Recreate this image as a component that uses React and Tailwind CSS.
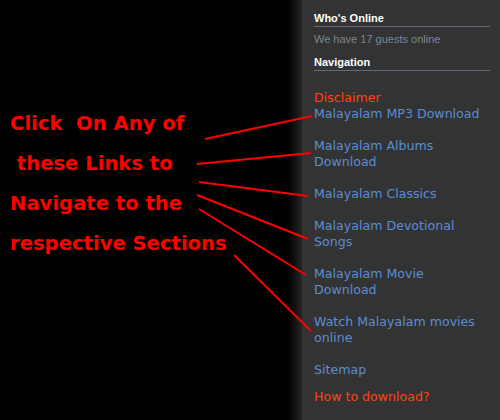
/**
 * Navigation help panel
 * Black canvas with red hints pointing at the sidebar links
 */

const links = [
    { label: 'Disclaimer', hot: true, gap: 'mt-[19px]' },
    { label: 'Malayalam MP3 Download', gap: '' },
    { label: 'Malayalam Albums Download', gap: 'mt-4' },
    { label: 'Malayalam Classics', gap: 'mt-4' },
    { label: 'Malayalam Devotional Songs', gap: 'mt-4' },
    { label: 'Malayalam Movie Download', gap: 'mt-4' },
    { label: 'Watch Malayalam movies online', gap: 'mt-4' },
    { label: 'Sitemap', gap: 'mt-4' },
    { label: 'How to download?', hot: true, gap: 'mt-[11px]' },
];

// arrows from the hint text to the links
const arrows = [
    [205, 139, 312, 116],
    [197, 164, 311, 153],
    [199, 182, 308, 196],
    [197, 195, 308, 239],
    [199, 209, 306, 275],
    [234, 255, 311, 331],
];

const App = () => {
    return (
        <div className="relative flex w-[500px] h-[420px] overflow-hidden bg-black">
            <div className="w-[283px] shrink-0 pt-[104px] pl-[10px] font-['DejaVu_Sans',sans-serif] font-bold text-[19.6px] leading-[40px] text-[#ff0000] whitespace-pre">
                <div>Click  On Any of</div>
                <div> these Links to</div>
                <div>Navigate to the</div>
                <div>respective Sections</div>
            </div>

            <div className="w-[19px] shrink-0 bg-gradient-to-r from-black via-[#0c0c0c] to-[#262626]"></div>

            <div className="w-[198px] shrink-0 bg-[#333333] pl-3 pr-[10px] pt-[11px] font-['Liberation_Sans',Arial,sans-serif]">
                <div className="text-[11px] leading-[14px] font-bold text-white pb-px border-b border-[#5d6b79]">
                    Who's Online
                </div>
                <p className="mt-[5px] text-[11px] leading-[14px] text-[#7c8792]">
                    We have 17 guests online
                </p>
                <div className="mt-[9px] text-[11px] leading-[14px] font-bold text-white pb-px border-b border-[#5d6b79]">
                    Navigation
                </div>
                <ul className="pr-2 font-['DejaVu_Sans',sans-serif] text-[12.6px] leading-4">
                    {links.map((link) => (
                        <li key={link.label} className={link.gap}>
                            <a className={link.hot ? 'text-[#ff4412]' : 'text-[#5b8dd3]'}>
                                {link.label}
                            </a>
                        </li>
                    ))}
                </ul>
            </div>

            <svg className="absolute inset-0 pointer-events-none" width="500" height="420" viewBox="0 0 500 420">
                {arrows.map(([x1, y1, x2, y2], i) => (
                    <line key={i} x1={x1} y1={y1} x2={x2} y2={y2} stroke="#ff0000" strokeWidth="2" />
                ))}
            </svg>
        </div>
    );
};

export default App;
